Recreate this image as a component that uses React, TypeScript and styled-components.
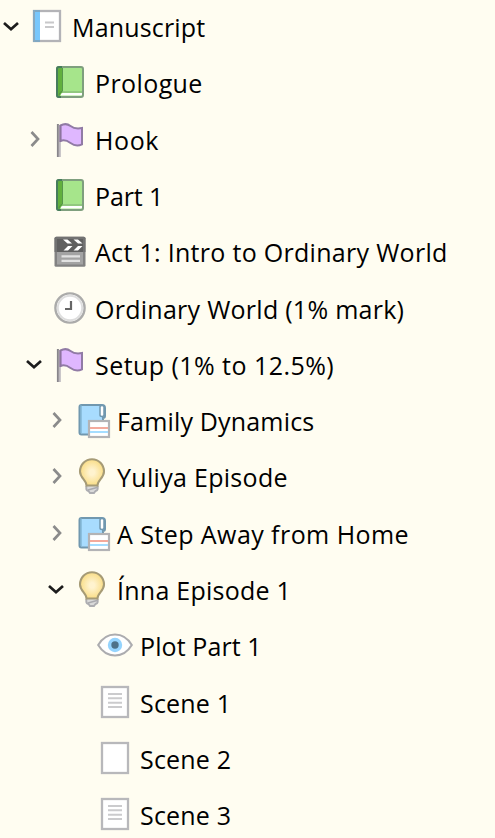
import React from "react";
import styled, { createGlobalStyle } from "styled-components";

const GlobalStyle = createGlobalStyle`
  html, body { margin: 0; padding: 0; background: #fffdf1; }
  body { overflow: hidden; }
`;

const Tree = styled.div`
  width: 495px;
  height: 838px;
  box-sizing: border-box;
  overflow: hidden;
  background: #fffdf1;
  color: #000;
  font-family: "Open Sans", "Noto Sans", sans-serif;
  font-size: 25px;
`;

const List = styled.div`
  display: flex;
  flex-direction: column;
  margin-top: -2px;
`;

const Row = styled.div<{ $indent: number }>`
  display: flex;
  align-items: center;
  flex: none;
  height: 56.286px;
  padding-left: ${(p) => p.$indent}px;
`;

const Toggle = styled.div`
  flex: none;
  width: 22px;
  height: 22px;
  margin-right: 7px;
  svg { display: block; }
`;

const IconBox = styled.div`
  flex: none;
  width: 36px;
  height: 36px;
  margin-right: 7px;
  svg { display: block; overflow: visible; }
`;

const Label = styled.span<{ $spacing: number }>`
  white-space: nowrap;
  line-height: 36px;
  padding-top: 2px;
  letter-spacing: ${(p) => p.$spacing}px;
`;

type IconName = "manuscript" | "book" | "flag" | "clapper" | "clock" | "notebook" | "bulb" | "eye" | "page" | "blank";

const drawings: Record<IconName, React.ReactNode> = {
  manuscript: (
    <>
      <rect x="5" y="3" width="26" height="30" fill="#fff" stroke="#b3b3b7" strokeWidth="2.300" />
      <rect x="6" y="4" width="5" height="28" fill="#78c7fc" />
      <path d="M4 3H11M4 33H11" stroke="#7fa8c4" strokeWidth="2" />
      <path d="M5 2V34" stroke="#88a9bf" strokeWidth="2" />
      <path d="M16 14.5H25M16 19H25" stroke="#c8c8ca" strokeWidth="2" />
    </>
  ),
  book: (
    <>
      <rect x="5" y="3" width="26" height="30" rx="2" fill="#a6e58b" />
      <path d="M5 4H10.500V28L8 32H5Z" fill="#62b03e" />
      <path d="M10 28H30" stroke="#7cab72" strokeWidth="1" />
      <path d="M30 29H10.500Q8.500 29.300 8.500 31.500H30Z" fill="#fff" />
      <path d="M10.500 3V27Q7.500 28 7 31" fill="none" stroke="#4b8a46" strokeWidth="0.800" />
      <rect x="5" y="3" width="26" height="30" rx="2" fill="none" stroke="#7f9f7e" strokeWidth="2" />
      <path d="M10 3H7Q5 3 5 5V31Q5 33 7 33H9" fill="none" stroke="#477d5c" strokeWidth="2" />
    </>
  ),
  flag: (
    <>
      <path d="M8.500 4.500Q14 1.500 18.500 5T30 7V23.300Q24 26 18.500 22T8.500 20Z" fill="#dfb7ff" stroke="#917ba5" strokeWidth="2" />
      <path d="M5.900 3V36" stroke="#88858b" strokeWidth="2" />
      <path d="M7.800 4V36" stroke="#bdb9bf" strokeWidth="2" />
      <path d="M8.300 4V21" stroke="#8d759e" strokeWidth="1.800" />
    </>
  ),
  clapper: (
    <>
      <rect x="2.500" y="3.700" width="31" height="30" rx="1.500" fill="#828282" />
      <rect x="5" y="19" width="26" height="12.500" fill="#a3a3a3" />
      <path d="M4.500 3.700H31.500Q33.500 3.700 33.500 5.500V19H2.500V5.500Q2.500 3.700 4.500 3.700Z" fill="#727272" />
      <rect x="5" y="6" width="26" height="13" fill="#606060" />
      <path d="M11 6.500H15.500L20 10.500H15.500ZM21.500 6.500H26L30.500 10.500H26ZM16 13H20.500L16 17.500H11.500ZM26 13H30.500L26 17.500H21.500Z" fill="#fff" />
      <path d="M9.500 23.300H28M9.500 27.800H28" stroke="#e2e2e2" strokeWidth="2.200" />
    </>
  ),
  clock: (
    <>
      <circle cx="18" cy="18" r="14.600" fill="#fff" stroke="#ababaa" strokeWidth="2.400" />
      <circle cx="18" cy="18" r="12.200" fill="none" stroke="#dedede" strokeWidth="2" />
      <path d="M19 11V19H13" fill="none" stroke="#666" strokeWidth="2.200" />
    </>
  ),
  notebook: (
    <>
      <path d="M7.500 3H28Q31 3 31 6V14Q31 16 29 16V32.500H7.500Q5.500 32.500 5.500 30.500V5Q5.500 3 7.500 3Z" fill="#a8dcfe" stroke="#7198af" strokeWidth="2" />
      <path d="M7 3V31" stroke="#7aadca" strokeWidth="1.200" />
      <path d="M26 5Q26 3.500 28 3.500T30 5V13Q30 14.500 28 14.500T26 13Z" fill="#fff" stroke="#7198af" strokeWidth="1.500" />
      <rect x="15" y="19" width="20" height="16" fill="#fff" stroke="#b3b3b5" strokeWidth="2.200" />
      <path d="M16 26H34" stroke="#f3aa9c" strokeWidth="2" />
      <path d="M16 30H34" stroke="#a5ddff" strokeWidth="2" />
    </>
  ),
  bulb: (
    <>
      <defs>
        <radialGradient id="bulbGlow" cx="50%" cy="50%" r="52%">
          <stop offset="20%" stopColor="#fff3cf" />
          <stop offset="100%" stopColor="#f9dc83" />
        </radialGradient>
      </defs>
      <path d="M13 28H23V31L20.500 34.500H15.500L13 31Z" fill="#dadada" />
      <path d="M12.300 28V30.500Q12.300 32.500 14.500 33L16 35H20L21.500 33Q23.700 32.500 23.700 30.500V28" fill="none" stroke="#adadb1" strokeWidth="1.900" />
      <path d="M14 32L23 29.500" stroke="#aaaaaf" strokeWidth="1.700" />
      <path d="M12.500 27.500C12.500 22 6 20 6 13.500A12 12.300 0 0 1 30 13.500C30 20 23.500 22 23.500 27.500Z" fill="url(#bulbGlow)" stroke="#a69b76" strokeWidth="2.100" />
    </>
  ),
  eye: (
    <>
      <path d="M1.200 18Q7.500 7.500 18 7.500T34.800 18Q28.500 28.500 18 28.500T1.200 18Z" fill="#fff" stroke="#acacaf" strokeWidth="2.100" />
      <circle cx="18" cy="18" r="7.200" fill="#95d4fe" />
      <circle cx="18" cy="18" r="3.700" fill="#4d7188" />
    </>
  ),
  page: (
    <>
      <rect x="5" y="3" width="26" height="30" fill="#fff" stroke="#b8b8bb" strokeWidth="2.300" />
      <path d="M11 10H25M11 14.300H25M11 18.700H25M11 23H25" stroke="#cbcbcd" strokeWidth="2" />
    </>
  ),
  blank: <rect x="5" y="3" width="26" height="30" fill="#fff" stroke="#b8b8bb" strokeWidth="2.300" />,
};

function Icon({ name }: { name: IconName }) {
  return (
    <IconBox>
      <svg width="36" height="36" viewBox="0 0 36 36">{drawings[name]}</svg>
    </IconBox>
  );
}

function Chevron({ state }: { state?: "open" | "closed" }) {
  return (
    <Toggle>
      {state && (
        <svg width="22" height="22" viewBox="0 0 22 22" fill="none" strokeWidth="2.700">
          {state === "open" ? (
            <path d="M4 8L11 14.300L18 8" stroke="#1c1c1c" />
          ) : (
            <path d="M8.500 4L15 11L8.500 18" stroke="#8b8b8b" />
          )}
        </svg>
      )}
    </Toggle>
  );
}

interface Item {
  level: number;
  icon: IconName;
  label: string;
  spacing: number;
  state?: "open" | "closed";
}

const indents = [0, 23, 45, 68];

const items: Item[] = [
  { level: 0, icon: "manuscript", label: "Manuscript", spacing: 0.17, state: "open" },
  { level: 1, icon: "book", label: "Prologue", spacing: 0.4 },
  { level: 1, icon: "flag", label: "Hook", spacing: 0.6, state: "closed" },
  { level: 1, icon: "book", label: "Part 1", spacing: -0.1 },
  { level: 1, icon: "clapper", label: "Act 1: Intro to Ordinary World", spacing: 0.3 },
  { level: 1, icon: "clock", label: "Ordinary World (1% mark)", spacing: 0.27 },
  { level: 1, icon: "flag", label: "Setup (1% to 12.5%)", spacing: 0.45, state: "open" },
  { level: 2, icon: "notebook", label: "Family Dynamics", spacing: 0.17, state: "closed" },
  { level: 2, icon: "bulb", label: "Yuliya Episode", spacing: 0.3, state: "closed" },
  { level: 2, icon: "notebook", label: "A Step Away from Home", spacing: 0.44, state: "closed" },
  { level: 2, icon: "bulb", label: "Ínna Episode 1", spacing: 0.25, state: "open" },
  { level: 3, icon: "eye", label: "Plot Part 1", spacing: 0.1 },
  { level: 3, icon: "page", label: "Scene 1", spacing: 0.2 },
  { level: 3, icon: "blank", label: "Scene 2", spacing: 0.2 },
  { level: 3, icon: "page", label: "Scene 3", spacing: 0.2 },
];

export default function App() {
  return (
    <Tree>
      <GlobalStyle />
      <List role="tree">
        {items.map((item) => (
          <Row key={item.label} $indent={indents[item.level]} role="treeitem" aria-level={item.level + 1}>
            <Chevron state={item.state} />
            <Icon name={item.icon} />
            <Label $spacing={item.spacing}>{item.label}</Label>
          </Row>
        ))}
      </List>
    </Tree>
  );
}
